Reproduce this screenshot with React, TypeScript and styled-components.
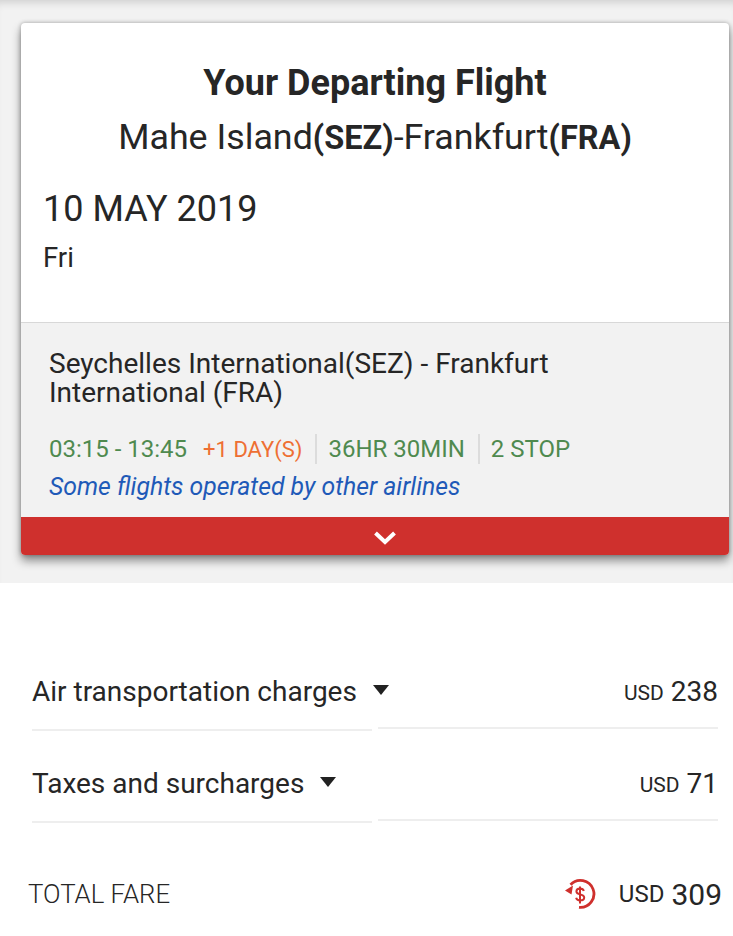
import React from 'react';
import styled, { createGlobalStyle } from 'styled-components';

const GlobalStyle = createGlobalStyle`
  html, body {
    margin: 0;
    padding: 0;
    background-color: #fff;
  }
  body {
    font-family: Roboto, "Liberation Sans", sans-serif;
    font-weight: 400;
    color: #262626;
  }
`;

const Page = styled.div`
  width: 733px;
  height: 936px;
  overflow: hidden;
`;

const FlightSection = styled.section`
  height: 583px;
  box-sizing: border-box;
  padding: 23px 4px 0 21px;
  background-color: #f2f2f2;
  box-shadow: inset 0 8px 8px -6px rgba(0, 0, 0, 0.16);
`;

const Card = styled.div`
  height: 532px;
  display: flex;
  flex-direction: column;
  border-radius: 4px;
  overflow: hidden;
  background-color: #fff;
  box-shadow: 0 6px 10px rgba(0, 0, 0, 0.42), 0 0 4px rgba(0, 0, 0, 0.3);
`;

const CardHeader = styled.header`
  height: 300px;
  flex: none;
  box-sizing: border-box;
  padding: 38px 22px 0;
  border-bottom: 1px solid #d8d8d8;
`;

const Title = styled.h1`
  margin: 0;
  text-align: center;
  font-size: 36px;
  line-height: 44px;
  font-weight: 700;
`;

const Route = styled.h2`
  margin: 10px 0 0;
  text-align: center;
  font-size: 35.8px;
  line-height: 44px;
  font-weight: 400;

  b {
    font-weight: 700;
    font-size: 32.5px;
  }
`;

const DateText = styled.div`
  margin-top: 27px;
  font-size: 36px;
  line-height: 44px;
`;

const DayText = styled.div`
  margin-top: 10px;
  font-size: 27.5px;
  line-height: 34px;
`;

const Details = styled.div`
  flex: 1;
  box-sizing: border-box;
  padding: 26px 28px 0;
  background-color: #f2f2f2;
`;

const Airports = styled.div`
  width: 560px;
  font-size: 28px;
  line-height: 29px;
`;

const TimeRow = styled.div`
  display: flex;
  align-items: center;
  margin-top: 27px;
  height: 30px;
  font-size: 24px;
  color: #4f8a4f;
`;

const Extra = styled.span`
  margin-left: 16px;
  font-size: 22px;
  color: #ee6f33;
`;

const Segment = styled.span`
  height: 30px;
  line-height: 30px;
  margin-left: 13px;
  padding-left: 11px;
  border-left: 2px solid #dcdcdc;
`;

const OperatedBy = styled.div`
  margin-top: 8px;
  font-size: 24.8px;
  line-height: 30px;
  font-style: italic;
  color: #1f5ab8;
`;

const ExpandBar = styled.div`
  height: 38px;
  flex: none;
  display: flex;
  align-items: center;
  justify-content: center;
  padding: 3px 0 0 20px;
  box-sizing: border-box;
  background-color: #cf302d;
`;

const Charges = styled.div`
  padding: 84px 15px 0 32px;
`;

const ChargeRow = styled.div`
  display: grid;
  grid-template-columns: 340px 340px;
  column-gap: 6px;
  height: 92px;
`;

const ChargeLabel = styled.div`
  height: 62px;
  display: flex;
  align-items: flex-start;
  gap: 16px;
  border-bottom: 2px solid #eeeeee;
  font-size: 28px;
  line-height: 50px;
  white-space: nowrap;
`;

const ChargeAmount = styled.div`
  height: 60px;
  display: flex;
  align-items: flex-start;
  justify-content: flex-end;
  gap: 7px;
  border-bottom: 2px solid #eeeeee;
  font-size: 28px;
  line-height: 50px;
`;

const Currency = styled.span`
  font-size: 21px;
  line-height: 52px;
`;

const Caret = styled.span`
  width: 0;
  height: 0;
  margin-top: 18px;
  border-left: 8.5px solid transparent;
  border-right: 8.5px solid transparent;
  border-top: 10px solid #212121;
`;

const TotalRow = styled.div`
  display: flex;
  align-items: center;
  height: 40px;
  margin-top: 23px;
  padding: 0 11px 0 28px;
  font-size: 25.8px;
  font-weight: 300;
`;

const TotalLabel = styled.span`
  flex: 1;
`;

const TotalAmount = styled.span`
  display: flex;
  align-items: center;
  gap: 7px;
  margin-left: 22px;
  font-size: 30px;
  font-weight: 400;

  span {
    font-size: 24px;
  }
`;

const charges = [
  { label: 'Air transportation charges', amount: 238 },
  { label: 'Taxes and surcharges', amount: 71 },
];

const App = () => {
  return (
    <Page>
      <GlobalStyle />
      <FlightSection>
        <Card>
          <CardHeader>
            <Title>Your Departing Flight</Title>
            <Route>
              Mahe Island<b>(SEZ)</b>-Frankfurt<b>(FRA)</b>
            </Route>
            <DateText>10 MAY 2019</DateText>
            <DayText>Fri</DayText>
          </CardHeader>
          <Details>
            <Airports>Seychelles International(SEZ) - Frankfurt International (FRA)</Airports>
            <TimeRow>
              <span>03:15 - 13:45</span>
              <Extra>+1 DAY(S)</Extra>
              <Segment>36HR 30MIN</Segment>
              <Segment>2 STOP</Segment>
            </TimeRow>
            <OperatedBy>Some flights operated by other airlines</OperatedBy>
          </Details>
          <ExpandBar>
            <svg width="24" height="16" viewBox="0 0 24 16" fill="none">
              <path d="M2.5 3l9.5 9 9.5-9" stroke="#fff" strokeWidth="4" />
            </svg>
          </ExpandBar>
        </Card>
      </FlightSection>
      <Charges>
        {charges.map(charge => (
          <ChargeRow key={charge.label}>
            <ChargeLabel>
              {charge.label}
              <Caret />
            </ChargeLabel>
            <ChargeAmount>
              <Currency>USD</Currency>
              {charge.amount}
            </ChargeAmount>
          </ChargeRow>
        ))}
      </Charges>
      <TotalRow>
        <TotalLabel>TOTAL FARE</TotalLabel>
        <svg width="32" height="32" viewBox="0 0 32 32" fill="none">
          <path d="M5.5 6.7A13.5 13.5 0 1 1 14 29.3" stroke="#cf302d" strokeWidth="2.8" />
          <path d="M0 12.5l8-5 -1.5 9z" fill="#cf302d" />
          <path
            d="M15 8.5v17M18.8 13c-.4-1.5-1.8-2.4-3.8-2.4-2.2 0-3.6 1.1-3.6 2.8 0 4 7.8 2 7.8 6 0 1.8-1.7 2.9-4 2.9-2.2 0-3.7-1-4.1-2.6"
            stroke="#cf302d"
            strokeWidth="2"
          />
        </svg>
        <TotalAmount>
          <span>USD</span>
          309
        </TotalAmount>
      </TotalRow>
    </Page>
  );
};

export default App;
